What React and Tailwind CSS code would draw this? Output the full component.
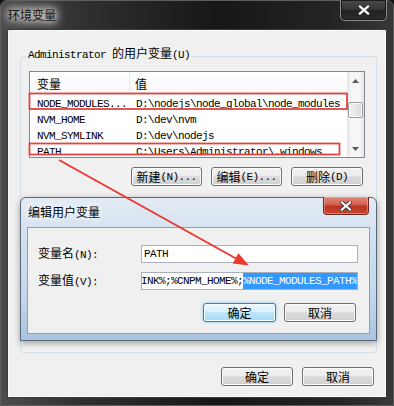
import React from "react";

const CJK = /([\u3400-\u9fff\uff00-\uffef]+)/;

// SimSun-ish mix: CJK at 12px, Latin as 6px-wide mono
function Txt({ children }) {
  const parts = String(children).split(CJK).filter(Boolean);
  return (
    <>
      {parts.map((p, i) =>
        CJK.test(p) ? (
          <span key={i} className="font-['Noto_Sans_CJK_SC',sans-serif] text-[12px] leading-[14px]">
            {p}
          </span>
        ) : (
          <span key={i} className="font-['Liberation_Mono',monospace] text-[11px] leading-[14px] tracking-[-0.6px]">
            {p}
          </span>
        )
      )}
    </>
  );
}

function Btn({ children, className = "", focus = false }) {
  return (
    <div
      className={`h-[19px] flex items-center justify-center rounded-[3px] border text-black whitespace-nowrap ${
        focus
          ? "border-[#3c7fb1] bg-[linear-gradient(#eaf6fd_0%,#d9f0fc_50%,#bee6fd_50%,#a7d9f5_100%)] shadow-[0_0_3px_#6ec0ef,inset_0_0_0_1px_#f4fbff]"
          : "border-[#707070] bg-[linear-gradient(#f2f2f2_0%,#ebebeb_50%,#dddddd_50%,#cfcfcf_100%)] shadow-[inset_0_0_0_1px_#fcfcfc]"
      } ${className}`}
    >
      {children}
    </div>
  );
}

function CloseX() {
  return (
    <svg width="12" height="10" viewBox="0 0 12 10">
      <path d="M2 1.5 L10 8.5 M10 1.5 L2 8.5" stroke="#3a3a3a" strokeWidth="4" strokeLinecap="square" />
      <path d="M2 1.5 L10 8.5 M10 1.5 L2 8.5" stroke="#ffffff" strokeWidth="2.2" strokeLinecap="square" />
    </svg>
  );
}

const rows = [
  ["NODE_MODULES...", "D:\\nodejs\\node_global\\node_modules"],
  ["NVM_HOME", "D:\\dev\\nvm"],
  ["NVM_SYMLINK", "D:\\dev\\nodejs"],
  ["PATH", "C:\\Users\\Administrator\\.windows"],
];

function ListView() {
  return (
    <div className="ml-[8px] mt-[5px] w-[336px] h-[87px] border border-[#828790] bg-white flex overflow-hidden">
      <div className="flex-1 flex flex-col">
        <div className="h-[23px] shrink-0 flex bg-[linear-gradient(#ffffff,#f7f8fa)]">
          <div className="w-[100px] h-full border-r border-[#e3e8ee] pl-[7px] flex items-center">
            <Txt>变量</Txt>
          </div>
          <div className="pl-[5px] flex items-center">
            <Txt>值</Txt>
          </div>
        </div>
        {rows.map(([k, v]) => (
          <div key={k} className="h-[16px] shrink-0 flex items-center whitespace-nowrap text-black">
            <div className="w-[100px] pl-[7px]">
              <Txt>{k}</Txt>
            </div>
            <div className="pl-[6px]">
              <Txt>{v}</Txt>
            </div>
          </div>
        ))}
      </div>
      <div className="w-[17px] h-full flex flex-col items-center bg-[linear-gradient(90deg,#e4e4e4,#f6f6f6_25%,#f6f6f6_75%,#e4e4e4)]">
        <div className="h-[17px] flex items-center justify-center">
          <svg width="7" height="4" viewBox="0 0 7 4">
            <path d="M0 4 L3.5 0 L7 4 Z" fill="#5a5a5a" />
          </svg>
        </div>
        <div className="mt-[13px] w-[15px] h-[16px] rounded-[2px] border border-[#9b9b9b] bg-[linear-gradient(90deg,#f4f4f4,#e8e8e8_50%,#d9d9d9)] shadow-[inset_0_0_0_1px_#fbfbfb]" />
        <div className="mt-auto h-[17px] flex items-center justify-center">
          <svg width="7" height="4" viewBox="0 0 7 4">
            <path d="M0 0 L3.5 4 L7 0 Z" fill="#5a5a5a" />
          </svg>
        </div>
      </div>
    </div>
  );
}

function EditDialog() {
  return (
    <div className="absolute left-[20px] top-[197px] w-[357px] h-[144px] rounded-t-[6px] border border-[#5b6878] bg-[linear-gradient(180deg,#e3ebf4_0%,#d3e1f0_25%,#c3d7ed_70%,#a9c3e0_100%)] flex flex-col shadow-[0_2px_6px_rgba(0,0,0,0.35)]">
      <div className="h-[29px] shrink-0 flex items-start">
        <span className="ml-[7px] mt-[7px] text-black [text-shadow:0_0_6px_#ffffff,0_0_10px_#ffffff]">
          <Txt>编辑用户变量</Txt>
        </span>
        <div className="ml-auto mr-[7px] -mt-px w-[46px] h-[18px] rounded-b-[4px] border border-t-0 border-[#6e2a22] bg-[linear-gradient(#e28877_0%,#d0604e_45%,#bb3420_55%,#c6452f_100%)] shadow-[inset_0_0_0_1px_rgba(255,190,175,0.45)] flex items-center justify-center">
          <CloseX />
        </div>
      </div>
      <div className="mx-[6px] mb-[6px] flex-1 bg-[#f0f0f0] border border-[#8ba0b9] pt-[17px] pl-[10px] flex flex-col">
        <div className="flex items-center h-[18px]">
          <div className="w-[103px] whitespace-nowrap">
            <Txt>变量名(N):</Txt>
          </div>
          <div className="w-[217px] h-[18px] border border-[#a9b0ba] bg-white pl-[2px] flex items-center">
            <Txt>PATH</Txt>
          </div>
        </div>
        <div className="mt-[9px] flex items-center h-[18px]">
          <div className="w-[103px] whitespace-nowrap">
            <Txt>变量值(V):</Txt>
          </div>
          <div className="w-[217px] h-[18px] border border-[#a9b0ba] bg-white flex items-stretch overflow-hidden whitespace-nowrap">
            <span className="-ml-px flex items-center">
              <Txt>INK%;%CNPM_HOME%;</Txt>
            </span>
            <span className="flex items-center bg-[#3399ff] text-white">
              <Txt>%NODE_MODULES_PATH%</Txt>
            </span>
          </div>
        </div>
        <div className="mt-[13px] flex justify-end gap-[8px] pr-[13px]">
          <Btn focus className="w-[73px]">
            <Txt>确定</Txt>
          </Btn>
          <Btn className="w-[72px]">
            <Txt>取消</Txt>
          </Btn>
        </div>
      </div>
    </div>
  );
}

export default function App() {
  return (
    <div className="relative w-[394px] h-[406px] overflow-hidden bg-[#111111] text-black text-[12px] leading-[14px]">
      <div className="h-full rounded-t-[7px] border border-[#5e5e5e] bg-[linear-gradient(90deg,#4c4c4c_0%,#2f2f2f_22%,#171717_55%,#242424_85%,#383838_100%)] flex flex-col">
        <div className="h-[28px] shrink-0 flex items-start">
          <span className="ml-[7px] mt-[7px] text-[#111] [text-shadow:0_0_7px_#ffffff,0_0_12px_#ffffff,0_0_12px_#ffffff]">
            <Txt>环境变量</Txt>
          </span>
          <div className="ml-auto mr-[6px] -mt-px w-[47px] h-[21px] rounded-b-[5px] border border-t-0 border-[#8c8c8c] bg-[linear-gradient(#4a4a4a_0%,#333333_50%,#222222_52%,#2c2c2c_100%)] shadow-[inset_0_0_0_1px_#1a1a1a] flex items-center justify-center">
            <CloseX />
          </div>
        </div>
        <div className="mx-[6px] mb-[7px] flex-1 flex flex-col bg-[#f0f0f0] border border-[#3a3a3a] rounded-t-[2px] shadow-[inset_0_0_0_1px_#fafafa]">
          <fieldset className="ml-[12px] mr-[9px] mt-[16px] h-[307px] rounded-[3px] border border-[#d5dfe5]">
            <legend className="ml-[6px] px-[1px] pb-[4px] whitespace-nowrap">
              <Txt>Administrator 的用户变量(U)</Txt>
            </legend>
            <ListView />
            <div className="mt-[9px] flex justify-end gap-[9px] pr-[13px]">
              <Btn className="w-[71px]">
                <Txt>新建(N)...</Txt>
              </Btn>
              <Btn className="w-[71px]">
                <Txt>编辑(E)...</Txt>
              </Btn>
              <Btn className="w-[72px]">
                <Txt>删除(D)</Txt>
              </Btn>
            </div>
          </fieldset>
          <div className="mt-[14px] flex justify-end gap-[9px] pr-[12px]">
            <Btn className="w-[72px]">
              <Txt>确定</Txt>
            </Btn>
            <Btn className="w-[72px]">
              <Txt>取消</Txt>
            </Btn>
          </div>
        </div>
      </div>

      <EditDialog />

      <svg className="absolute inset-0 pointer-events-none" width="394" height="406" viewBox="0 0 394 406">
        <rect x="29.5" y="93.5" width="317.5" height="15.5" fill="none" stroke="#e0443f" strokeWidth="1.8" />
        <rect x="29.5" y="143.5" width="310" height="11" fill="none" stroke="#e0443f" strokeWidth="1.8" />
        <line x1="59" y1="160" x2="236" y2="258.5" stroke="#ea3a30" strokeWidth="2" />
        <polygon points="249,265.5 232.6,263.6 238.4,253.2" fill="#ea3a30" />
      </svg>
    </div>
  );
}
